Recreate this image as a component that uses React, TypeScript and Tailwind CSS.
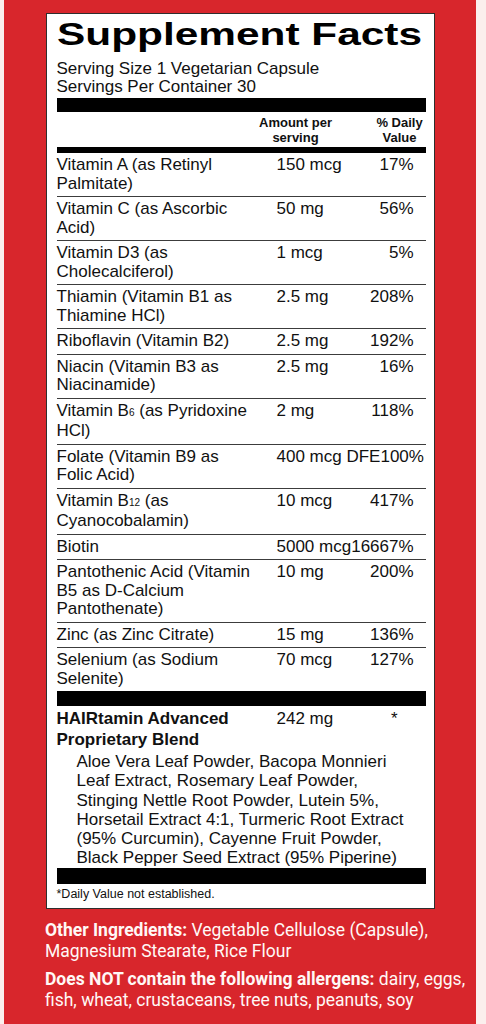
import React from "react";

interface Nutrient {
  name: React.ReactNode;
  amount: string;
  dv: string;
}

const nutrients: Nutrient[] = [
  { name: "Vitamin A (as Retinyl Palmitate)", amount: "150 mcg", dv: "17%" },
  { name: "Vitamin C (as Ascorbic Acid)", amount: "50 mg", dv: "56%" },
  { name: "Vitamin D3 (as Cholecalciferol)", amount: "1 mcg", dv: "5%" },
  { name: "Thiamin (Vitamin B1 as Thiamine HCl)", amount: "2.5 mg", dv: "208%" },
  { name: "Riboflavin (Vitamin B2)", amount: "2.5 mg", dv: "192%" },
  { name: "Niacin (Vitamin B3 as Niacinamide)", amount: "2.5 mg", dv: "16%" },
  {
    name: (
      <>
        Vitamin B<span className="text-[10px]">6</span> (as Pyridoxine HCl)
      </>
    ),
    amount: "2 mg",
    dv: "118%",
  },
  { name: "Folate (Vitamin B9 as Folic Acid)", amount: "400 mcg DFE", dv: "100%" },
  {
    name: (
      <>
        Vitamin B<span className="text-[10px]">12</span> (as Cyanocobalamin)
      </>
    ),
    amount: "10 mcg",
    dv: "417%",
  },
  { name: "Biotin", amount: "5000 mcg", dv: "16667%" },
  {
    name: "Pantothenic Acid (Vitamin B5 as D-Calcium Pantothenate)",
    amount: "10 mg",
    dv: "200%",
  },
  { name: "Zinc (as Zinc Citrate)", amount: "15 mg", dv: "136%" },
  { name: "Selenium (as Sodium Selenite)", amount: "70 mcg", dv: "127%" },
];

const NutrientRow = ({ item, first }: { item: Nutrient; first: boolean }) => (
  <div
    className={
      first
        ? "flex py-[3px] leading-[18.5px]"
        : "flex py-[3px] leading-[18.5px] border-t border-[#3c3c3c]"
    }
  >
    <div className="w-[220px] shrink-0 pr-[20px]">{item.name}</div>
    <div className="whitespace-nowrap">{item.amount}</div>
    <div className="ml-auto whitespace-nowrap pr-[12px] text-right">{item.dv}</div>
  </div>
);

export default function App() {
  return (
    <div className="min-h-[1024px] bg-[#fbefed] pl-[4px] pr-[10px] font-['Liberation_Sans',Arial,sans-serif] text-[#111]">
      <div className="h-[1024px] bg-[#d8262c] pt-[13px]">
        {/* label box */}
        <div className="ml-[42px] w-[389px] border-[1.5px] border-[#2e2e2e] bg-white pl-[9.5px] pr-[8.5px] pt-[4px] pb-[7px] text-[17px]">
          <h1 className="w-max origin-left scale-x-[1.367] whitespace-nowrap text-[31px] font-bold leading-[34px] text-black">
            Supplement Facts
          </h1>
          <div className="mt-[8px] leading-[18px]">
            <p>Serving Size 1 Vegetarian Capsule</p>
            <p>Servings Per Container 30</p>
          </div>
          <div className="mt-[2px] h-[14px] bg-black" />

          <div className="mt-[4px] flex text-[13px] font-bold leading-[14.5px]">
            <div className="w-[193px] shrink-0" />
            <div className="w-[92px] text-center">
              Amount per
              <br />
              serving
            </div>
            <div className="ml-auto w-[52px] text-center">
              % Daily
              <br />
              Value
            </div>
          </div>
          <div className="mt-[2px] h-[6px] bg-black" />

          <div>
            {nutrients.map((item, i) => (
              <NutrientRow key={i} item={item} first={i === 0} />
            ))}
          </div>
          <div className="h-[15px] bg-black" />

          <div className="flex pt-[3px] leading-[20.5px]">
            <div className="w-[220px] shrink-0 pr-[20px] font-bold">
              HAIRtamin Advanced Proprietary Blend
            </div>
            <div className="whitespace-nowrap">242 mg</div>
            <div className="ml-auto pr-[28px]">*</div>
          </div>
          <p className="mt-[2px] pl-[20px] pr-[8px] leading-[19.3px]">
            Aloe Vera Leaf Powder, Bacopa Monnieri Leaf Extract, Rosemary Leaf Powder,
            Stinging Nettle Root Powder, Lutein 5%, Horsetail Extract 4:1, Turmeric Root
            Extract (95% Curcumin), Cayenne Fruit Powder, Black Pepper Seed Extract (95%
            Piperine)
          </p>
          <div className="h-[16px] bg-black" />
          <p className="mt-[3px] text-[12.5px] leading-[14px]">*Daily Value not established.</p>
        </div>

        {/* other ingredients */}
        <div className="mt-[11px] pl-[41px] pr-[2px] font-['Roboto',sans-serif] text-[17.5px] leading-[21px] text-[#fff8f6]">
          <p>
            <span className="font-bold">Other Ingredients:</span> Vegetable Cellulose (Capsule),
            Magnesium Stearate, Rice Flour
          </p>
          <p className="mt-[7px]">
            <span className="font-bold">Does NOT contain the following allergens:</span> dairy,
            eggs, fish, wheat, crustaceans, tree nuts, peanuts, soy
          </p>
        </div>
      </div>
    </div>
  );
}
